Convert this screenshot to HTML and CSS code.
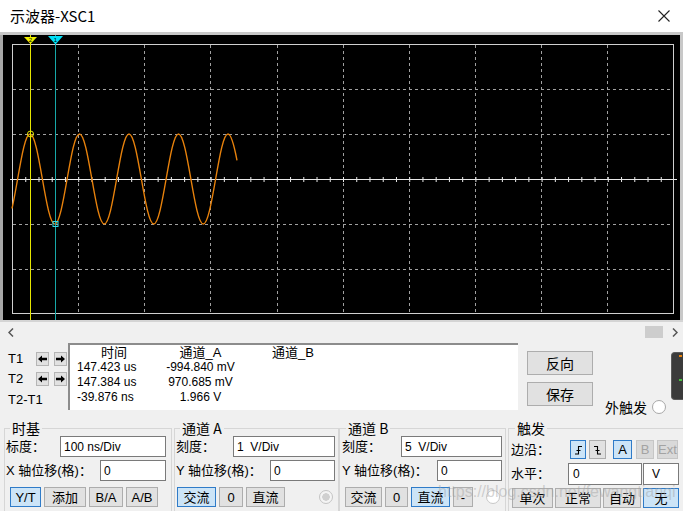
FILE: index.html
```html
<!DOCTYPE html>
<html lang="zh">
<head>
<meta charset="utf-8">
<title>示波器-XSC1</title>
<link rel="stylesheet" href="styles.css">
</head>
<body>
<div class="window">
  <header class="titlebar">
    <span class="title">示波器-XSC1</span>
    <svg class="close" width="12" height="12" viewBox="0 0 12 12"><path d="M0.5 0.5 L11.5 11.5 M11.5 0.5 L0.5 11.5" stroke="#222" stroke-width="1.1" fill="none"/></svg>
  </header>

  <svg class="scope" width="683" height="290" viewBox="0 0 683 290">
    <rect x="0" y="0" width="683" height="290" fill="#c8c8c8"/>
    <rect x="0" y="3" width="3" height="285" fill="#a8a8a8"/>
    <rect x="3" y="3" width="677" height="285" fill="#000"/>
    <rect x="0" y="288" width="683" height="2" fill="#d4d4d4"/>
    <rect x="12.5" y="12.5" width="661" height="269" fill="none" stroke="#d0d0d0" stroke-width="1"/>
    <g stroke="#a0a0a0" stroke-width="1" stroke-dasharray="3 3" fill="none">
      <line x1="13" y1="57.5" x2="673" y2="57.5"/>
      <line x1="13" y1="102.5" x2="673" y2="102.5"/>
      <line x1="13" y1="192.5" x2="673" y2="192.5"/>
      <line x1="13" y1="237.5" x2="673" y2="237.5"/>
      <line x1="78.5" y1="13" x2="78.5" y2="282"/>
      <line x1="144.5" y1="13" x2="144.5" y2="282"/>
      <line x1="210.5" y1="13" x2="210.5" y2="282"/>
      <line x1="277.5" y1="13" x2="277.5" y2="282"/>
      <line x1="343.5" y1="13" x2="343.5" y2="282"/>
      <line x1="409.5" y1="13" x2="409.5" y2="282"/>
      <line x1="475.5" y1="13" x2="475.5" y2="282"/>
      <line x1="541.5" y1="13" x2="541.5" y2="282"/>
      <line x1="607.5" y1="13" x2="607.5" y2="282"/>
    </g>
    <line x1="10" y1="147.5" x2="677" y2="147.5" stroke="#e8e8e8" stroke-width="1"/>
    <line x1="12" y1="147.5" x2="674" y2="147.5" stroke="#e8e8e8" stroke-width="5" stroke-dasharray="1 12.24"/>
    <path d="M12,176.5 Q13.89,168.3 17.625,147
      c4.137,-23.63 7.92,-45 12.375,-45 c4.455,0 8.238,21.37 12.375,45 c4.137,23.63 7.92,45 12.375,45 c4.455,0 8.238,-21.37 12.375,-45
      c4.137,-23.63 7.92,-45 12.375,-45 c4.455,0 8.238,21.37 12.375,45 c4.137,23.63 7.92,45 12.375,45 c4.455,0 8.238,-21.37 12.375,-45
      c4.137,-23.63 7.92,-45 12.375,-45 c4.455,0 8.238,21.37 12.375,45 c4.137,23.63 7.92,45 12.375,45 c4.455,0 8.238,-21.37 12.375,-45
      c4.137,-23.63 7.92,-45 12.375,-45 c4.455,0 8.238,21.37 12.375,45 c4.137,23.63 7.92,45 12.375,45 c4.455,0 8.238,-21.37 12.375,-45
      c4.137,-23.63 7.92,-45 12.375,-45 Q231.93,102 237,128.3" fill="none" stroke="#e8820c" stroke-width="1.4"/>
    <line x1="30.5" y1="3" x2="30.5" y2="288" stroke="#e6e600" stroke-width="1"/>
    <line x1="55.5" y1="3" x2="55.5" y2="288" stroke="#17a8a8" stroke-width="1"/>
    <circle cx="30.5" cy="102" r="3" fill="none" stroke="#e6e600" stroke-width="1"/>
    <rect x="53" y="189.5" width="5" height="5" fill="none" stroke="#30d8e8" stroke-width="1"/>
    <polygon points="24,5 37,5 30.5,12" fill="#f0f000"/>
    <polygon points="48,4 63,4 55.5,12.5" fill="#00e0f8"/>
    <text x="30.5" y="10" font-size="6" font-family="Liberation Sans" text-anchor="middle" fill="#000">2</text>
    <text x="55.5" y="10" font-size="6" font-family="Liberation Sans" text-anchor="middle" fill="#000">1</text>
  </svg>

  <div class="hscroll">
    <svg class="chev" width="6" height="9" viewBox="0 0 6 9"><polyline points="5,0.5 1,4.5 5,8.5" fill="none" stroke="#555" stroke-width="1.5"/></svg>
    <span class="thumb"></span>
    <svg class="chev right" width="6" height="9" viewBox="0 0 6 9"><polyline points="1,0.5 5,4.5 1,8.5" fill="none" stroke="#555" stroke-width="1.5"/></svg>
  </div>

  <div class="upper">
    <div class="cursors">
      <span class="clabel">T1</span>
      <button class="arrow"><svg width="9" height="8" viewBox="0 0 9 8"><path d="M0 4 L4 0.5 L4 2.8 L9 2.8 L9 5.2 L4 5.2 L4 7.5 Z" fill="#000"/></svg></button>
      <button class="arrow"><svg width="9" height="8" viewBox="0 0 9 8"><path d="M9 4 L5 0.5 L5 2.8 L0 2.8 L0 5.2 L5 5.2 L5 7.5 Z" fill="#000"/></svg></button>
      <span class="clabel">T2</span>
      <button class="arrow"><svg width="9" height="8" viewBox="0 0 9 8"><path d="M0 4 L4 0.5 L4 2.8 L9 2.8 L9 5.2 L4 5.2 L4 7.5 Z" fill="#000"/></svg></button>
      <button class="arrow"><svg width="9" height="8" viewBox="0 0 9 8"><path d="M9 4 L5 0.5 L5 2.8 L0 2.8 L0 5.2 L5 5.2 L5 7.5 Z" fill="#000"/></svg></button>
      <span class="clabel diff">T2-T1</span>
    </div>

    <div class="readout">
      <span class="h">时间</span><span class="h">通道_A</span><span class="h">通道_B</span>
      <span class="t">147.423 us</span><span class="a">-994.840 mV</span><span></span>
      <span class="t">147.384 us</span><span class="a">970.685 mV</span><span></span>
      <span class="t">-39.876 ns</span><span class="a">1.966 V</span><span></span>
    </div>

    <div class="actions">
      <button class="bigbtn">反向</button>
      <button class="bigbtn">保存</button>
    </div>

    <div class="ext"><span>外触发</span><span class="radio"></span></div>

    <div class="thumbwin"><span class="dot orange"></span><span class="dot green"></span></div>
  </div>

  <div class="lower">
    <fieldset class="grp g-time">
      <legend>时基</legend>
      <div class="frow"><span class="lbl">标度：</span><div class="field w106">100 ns/Div</div></div>
      <div class="frow r2"><span class="lbl">X 轴位移(格)：</span><div class="field w66">0</div></div>
      <div class="brow">
        <button class="btn on w31">Y/T</button>
        <button class="btn w42">添加</button>
        <button class="btn w34">B/A</button>
        <button class="btn w32">A/B</button>
      </div>
    </fieldset>

    <fieldset class="grp g-cha">
      <legend>通道 A</legend>
      <div class="frow"><span class="lbl">刻度：</span><div class="field w102">1  V/Div</div></div>
      <div class="frow r2"><span class="lbl">Y 轴位移(格)：</span><div class="field w65">0</div></div>
      <div class="brow">
        <button class="btn on w39">交流</button>
        <button class="btn w24">0</button>
        <button class="btn w39">直流</button>
        <span class="radio dim"></span>
      </div>
    </fieldset>

    <fieldset class="grp g-chb">
      <legend>通道 B</legend>
      <div class="frow"><span class="lbl">刻度：</span><div class="field w101">5  V/Div</div></div>
      <div class="frow r2"><span class="lbl">Y 轴位移(格)：</span><div class="field w65">0</div></div>
      <div class="brow">
        <button class="btn w37">交流</button>
        <button class="btn w23">0</button>
        <button class="btn on w39">直流</button>
        <button class="btn w20">-</button>
        <span class="radio rb"></span>
      </div>
    </fieldset>

    <fieldset class="grp g-trig">
      <legend>触发</legend>
      <div class="trow1">
        <span class="lbl tl">边沿：</span>
        <button class="btn on w16 ebtn"><svg width="9" height="10" viewBox="0 0 9 10"><path d="M1 9 H4.5 V1.5 H8 M2.5 5.5 H6.5" fill="none" stroke="#000" stroke-width="1.1"/></svg></button>
        <button class="btn w17 ebtn g3"><svg width="9" height="10" viewBox="0 0 9 10"><path d="M1 1.5 H4.5 V9 H8 M2.5 5.5 H6.5" fill="none" stroke="#000" stroke-width="1.1"/></svg></button>
        <button class="btn on w19 ga">A</button>
        <button class="btn off w18 gb">B</button>
        <button class="btn off w21 g3">Ext</button>
      </div>
      <div class="trow2">
        <span class="lbl tl2">水平：</span>
        <div class="field w74 pad4">0</div>
        <div class="field w36 pad8">V</div>
      </div>
      <div class="trow3">
        <button class="btn w41">单次</button>
        <button class="btn w46">正常</button>
        <button class="btn w38">自动</button>
        <button class="btn on w36">无</button>
      </div>
    </fieldset>
  </div>

  <div class="watermark">https://blog.csdn.net/fewangtianqi</div>
</div>
</body>
</html>
```

FILE: styles.css
```css
* { box-sizing: border-box; }
html, body { margin: 0; padding: 0; }
body {
  width: 683px;
  height: 511px;
  overflow: hidden;
  background: #f0f0f0;
  font-family: "Liberation Sans", "Noto Sans CJK SC", sans-serif;
  font-size: 13px;
  color: #000;
}
.window {
  position: relative;
  width: 683px;
  height: 511px;
  overflow: hidden;
  background: #f0f0f0;
}

/* title bar */
.titlebar {
  height: 32px;
  background: #fff;
  display: flex;
  align-items: center;
  justify-content: space-between;
  padding: 0 13px 0 10px;
}
.title {
  font-family: "Noto Sans CJK SC", sans-serif;
  font-size: 15px;
  line-height: 20px;
}
.close { display: block; }

.scope { display: block; }

/* scrollbar */
.hscroll {
  height: 20px;
  display: flex;
  align-items: center;
  padding-left: 8px;
}
.chev { display: block; }
.thumb {
  margin-left: auto;
  width: 18px;
  height: 12px;
  background: #cdcdcd;
}
.chev.right { margin-left: 9px; margin-right: 5px; }

/* upper panel */
.upper {
  height: 68px;
  display: flex;
  align-items: flex-start;
}
.cursors {
  width: 68px;
  padding: 10px 0 0 8px;
  display: grid;
  grid-template-columns: 23px 13px 13px;
  grid-template-rows: 14px 14px 15px;
  column-gap: 5px;
  row-gap: 6px;
}
.clabel {
  font-size: 13px;
  line-height: 14px;
  white-space: nowrap;
}
.clabel.diff {
  grid-column: 1 / 4;
  line-height: 15px;
}
.arrow {
  width: 13px;
  height: 14px;
  padding: 0;
  margin: 0;
  border: 1px solid #b5b5b5;
  background: #e1e1e1;
  display: flex;
  align-items: center;
  justify-content: center;
}
.arrow svg { display: block; }

.readout {
  margin-top: 1px;
  width: 450px;
  height: 67px;
  background: #fff;
  border-top: 2px solid #8c8c8c;
  border-left: 2px solid #8c8c8c;
  display: grid;
  grid-template-columns: 88px 85px 100px;
  grid-auto-rows: 15px;
  align-content: start;
  font-size: 12px;
  line-height: 15px;
  white-space: nowrap;
}
.readout .h { text-align: center; font-size: 13px; }
.readout .t { padding-left: 7px; }
.readout .a { text-align: center; }

.actions {
  margin-left: 9px;
  padding-top: 9px;
  display: flex;
  flex-direction: column;
  gap: 7px;
}
.bigbtn {
  width: 66px;
  height: 24px;
  padding: 0;
  margin: 0;
  font-family: "Noto Sans CJK SC", sans-serif;
  font-size: 14px;
  line-height: 1;
  border: 1px solid #adadad;
  background: #e1e1e1;
  color: #000;
}

.ext {
  margin-left: 12px;
  margin-top: 58px;
  display: flex;
  align-items: center;
  gap: 5px;
  font-family: "Noto Sans CJK SC", sans-serif;
  font-size: 14px;
  line-height: 14px;
}
.radio {
  display: block;
  width: 14px;
  height: 14px;
  border-radius: 50%;
  border: 1px solid #a8a8a8;
  background: #fff;
  flex: none;
}
.radio.dim {
  margin-left: 31px;
  border-color: #c4c4c4;
  background: radial-gradient(circle, #d0d0d0 0 3.5px, #f4f4f4 4px);
}
.radio.rb { margin-left: 10px; border-color: #c8c8c8; }

.thumbwin {
  margin-left: auto;
  margin-top: 10px;
  width: 12px;
  height: 48px;
  background: #3b3b3b;
  border: 1px solid #5a5a5a;
  border-right: none;
  border-radius: 4px 0 0 4px;
  display: flex;
  flex-direction: column;
  align-items: flex-end;
}
.dot { width: 3px; height: 2px; margin-right: 1px; }
.dot.orange { background: #e8820c; margin-top: 2px; }
.dot.green { background: #48c040; margin-top: 22px; }

/* lower panel */
.lower {
  height: 101px;
  display: flex;
  align-items: flex-start;
}
.grp {
  margin: 10px 0 0 0;
  padding: 0;
  min-width: 0;
  height: 100px;
  border: 1px solid #d6d6d6;
  flex: none;
}
.grp legend {
  font-family: "Noto Sans CJK SC", sans-serif;
  font-size: 14px;
  line-height: 16px;
  padding: 0 2px;
  margin-left: 4px;
}
.g-time { margin-left: 4px; width: 168px; padding: 0 5px 0 1px; }
.g-cha  { margin-left: 2px; width: 165px; padding: 0 3px 0 1px; }
.g-chb  { margin-left: 0; width: 167px; padding: 0 3px 0 2px; }
.g-trig { margin-left: 2px; width: 180px; padding: 0 0 0 2px; }

.lbl {
  font-size: 13px;
  line-height: 16px;
  white-space: nowrap;
}
.frow {
  display: flex;
  align-items: center;
  justify-content: space-between;
  height: 21px;
}
.frow.r2 { margin-top: 3px; }
.brow {
  display: flex;
  align-items: center;
  gap: 3px;
  margin-top: 6px;
  height: 20px;
}
.g-time .brow { padding-left: 4px; }
.g-cha .brow { padding-left: 1px; }
.g-chb .brow { padding-left: 3px; }

.field {
  height: 100%;
  background: #fff;
  border: 1px solid #7a7a7a;
  display: flex;
  align-items: center;
  padding-left: 3px;
  font-size: 12px;
  white-space: pre;
  flex: none;
}
.field.pad4 { padding-left: 4px; }
.field.pad8 { padding-left: 8px; }

.btn {
  height: 20px;
  padding: 0;
  margin: 0;
  font-family: "Liberation Sans", "Noto Sans CJK SC", sans-serif;
  font-size: 13px;
  line-height: 1;
  color: #000;
  border: 1px solid #adadad;
  background: #e1e1e1;
  display: inline-flex;
  align-items: center;
  justify-content: center;
  flex: none;
}
.btn.on { background: #cce4f7; border-color: #2f7bc8; }
.btn.off { color: #a3a3a3; background: #d9d9d9; border-color: #c6c6c6; }
.btn svg { display: block; }

.trow1 {
  display: flex;
  align-items: center;
  margin-top: 4px;
  height: 19px;
}
.trow1 .btn { height: 19px; }
.tl { width: 59px; flex: none; }
.ebtn.g3, .btn.g3 { margin-left: 3px; }
.btn.ga { margin-left: 7px; }
.btn.gb { margin-left: 4px; }
.trow2 {
  display: flex;
  align-items: center;
  gap: 1px;
  margin-top: 4px;
  height: 22px;
}
.tl2 { width: 56px; flex: none; }
.trow3 {
  display: flex;
  align-items: center;
  gap: 2px;
  margin-top: 3px;
  margin-left: 1px;
  height: 20px;
}

.w16 { width: 16px; } .w17 { width: 17px; } .w18 { width: 18px; } .w19 { width: 19px; }
.w20 { width: 20px; } .w21 { width: 21px; } .w23 { width: 23px; } .w24 { width: 24px; }
.w31 { width: 31px; } .w32 { width: 32px; } .w34 { width: 34px; } .w36 { width: 36px; }
.w37 { width: 37px; } .w38 { width: 38px; } .w39 { width: 39px; } .w41 { width: 41px; }
.w42 { width: 42px; } .w46 { width: 46px; }
.w65 { width: 65px; } .w66 { width: 66px; } .w74 { width: 74px; }
.w101 { width: 101px; } .w102 { width: 102px; } .w106 { width: 106px; }

.watermark {
  position: absolute;
  left: 438px;
  top: 483px;
  font-size: 16px;
  line-height: 18px;
  color: rgba(160, 160, 160, 0.45);
  white-space: nowrap;
  pointer-events: none;
}
```
